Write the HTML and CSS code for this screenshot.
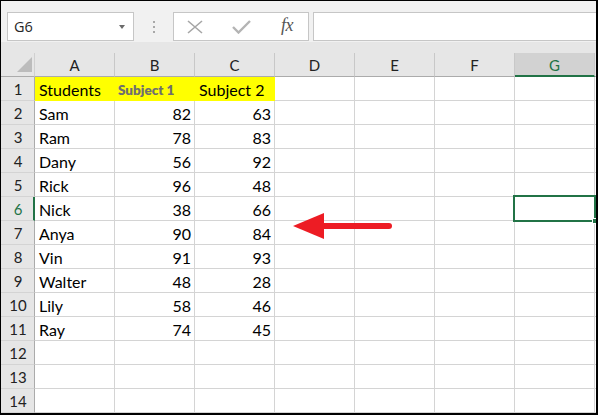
FILE: index.html
```html
<!DOCTYPE html>
<html>
<head>
<meta charset="utf-8">
<link rel="stylesheet" href="styles.css">
</head>
<body>
<div class="frame">
  <div class="toolbar">
    <div class="namebox"><span class="ref">G6</span><span class="caret"></span></div>
    <div class="dots"><i></i><i></i><i></i></div>
    <div class="fbtns">
      <svg class="ico-x" width="16" height="14" viewBox="0 0 16 14"><path d="M1 1 L15 13 M15 1 L1 13" stroke="#a6a6a6" stroke-width="1.6" fill="none"/></svg>
      <svg class="ico-ok" width="19" height="14" viewBox="0 0 19 14"><path d="M1 7 L6.5 12.5 L18 1" stroke="#b4b4b4" stroke-width="2.4" fill="none"/></svg>
      <span class="fx">fx</span>
    </div>
    <div class="finput"></div>
  </div>
  <div class="spacer"></div>
  <div class="grid">
    <div class="ch corner"><svg width="34" height="24" viewBox="0 0 34 24"><polygon points="31,4 31,19 16,19" fill="#bcbcbc"/></svg></div>
    <div class="ch">A</div><div class="ch">B</div><div class="ch">C</div><div class="ch">D</div><div class="ch">E</div><div class="ch">F</div><div class="ch sel">G</div><div class="ch"></div>

    <div class="rh">1</div><div class="c y">Students</div><div class="c y sub1">Subject 1</div><div class="c y">Subject 2</div><div class="c"></div><div class="c"></div><div class="c"></div><div class="c"></div><div class="c"></div>
    <div class="rh">2</div><div class="c">Sam</div><div class="c n">82</div><div class="c n">63</div><div class="c"></div><div class="c"></div><div class="c"></div><div class="c"></div><div class="c"></div>
    <div class="rh">3</div><div class="c">Ram</div><div class="c n">78</div><div class="c n">83</div><div class="c"></div><div class="c"></div><div class="c"></div><div class="c"></div><div class="c"></div>
    <div class="rh">4</div><div class="c">Dany</div><div class="c n">56</div><div class="c n">92</div><div class="c"></div><div class="c"></div><div class="c"></div><div class="c"></div><div class="c"></div>
    <div class="rh">5</div><div class="c">Rick</div><div class="c n">96</div><div class="c n">48</div><div class="c"></div><div class="c"></div><div class="c"></div><div class="c"></div><div class="c"></div>
    <div class="rh sel">6</div><div class="c">Nick</div><div class="c n">38</div><div class="c n">66</div><div class="c"></div><div class="c"></div><div class="c"></div><div class="c active"><span class="outline"><span class="handle"></span></span></div><div class="c"></div>
    <div class="rh">7</div><div class="c">Anya</div><div class="c n">90</div><div class="c n">84</div><div class="c"></div><div class="c"></div><div class="c"></div><div class="c"></div><div class="c"></div>
    <div class="rh">8</div><div class="c">Vin</div><div class="c n">91</div><div class="c n">93</div><div class="c"></div><div class="c"></div><div class="c"></div><div class="c"></div><div class="c"></div>
    <div class="rh">9</div><div class="c">Walter</div><div class="c n">48</div><div class="c n">28</div><div class="c"></div><div class="c"></div><div class="c"></div><div class="c"></div><div class="c"></div>
    <div class="rh">10</div><div class="c">Lily</div><div class="c n">58</div><div class="c n">46</div><div class="c"></div><div class="c"></div><div class="c"></div><div class="c"></div><div class="c"></div>
    <div class="rh">11</div><div class="c">Ray</div><div class="c n">74</div><div class="c n">45</div><div class="c"></div><div class="c"></div><div class="c"></div><div class="c"></div><div class="c"></div>
    <div class="rh">12</div><div class="c"></div><div class="c"></div><div class="c"></div><div class="c"></div><div class="c"></div><div class="c"></div><div class="c"></div><div class="c"></div>
    <div class="rh">13</div><div class="c"></div><div class="c"></div><div class="c"></div><div class="c"></div><div class="c"></div><div class="c"></div><div class="c"></div><div class="c"></div>
    <div class="rh">14</div><div class="c"></div><div class="c"></div><div class="c"></div><div class="c"></div><div class="c"></div><div class="c"></div><div class="c"></div><div class="c"></div>
  </div>
  <svg class="arrow" width="598" height="415" viewBox="0 0 598 415">
    <line x1="318" y1="226" x2="389" y2="226" stroke="#ed1c24" stroke-width="6" stroke-linecap="round"/>
    <polygon points="293,226 324,213 324,239" fill="#ed1c24"/>
  </svg>
</div>
</body>
</html>
```

FILE: styles.css
```css
* { box-sizing: border-box; }
html, body { margin: 0; padding: 0; background: #fff; }
.frame {
  position: relative;
  width: 598px;
  height: 415px;
  border-top: 1px solid #000;
  border-left: 1px solid #000;
  border-right: 2px solid #000;
  border-bottom: 2px solid #000;
  overflow: hidden;
  background: #e6e6e6;
  font-family: "Lato", "Liberation Sans", sans-serif;
}
.toolbar {
  height: 41px;
  background: #f1f1f1;
  display: flex;
  align-items: flex-start;
  padding-top: 11px;
  padding-left: 6px;
}
.namebox {
  width: 127px;
  height: 29px;
  background: #fff;
  border: 1px solid #c6c6c6;
  display: flex;
  align-items: center;
  justify-content: space-between;
  padding: 0 8px 0 6px;
  font-family: "Open Sans", "Noto Sans", sans-serif;
  font-size: 14.5px;
  color: #262626;
}
.caret {
  width: 0; height: 0;
  border-left: 3.5px solid transparent;
  border-right: 3.5px solid transparent;
  border-top: 4px solid #6a6a6a;
  margin-top: 1px;
}
.dots {
  width: 39px;
  height: 29px;
  display: flex;
  flex-direction: column;
  align-items: center;
  justify-content: center;
  gap: 3px;
}
.dots i {
  display: block;
  width: 2px;
  height: 2px;
  background: #a8a8a8;
}
.fbtns {
  width: 136px;
  height: 29px;
  background: #fff;
  border: 1px solid #c6c6c6;
  display: flex;
  align-items: center;
  padding-left: 13px;
}
.ico-x { margin-top: 1px; }
.ico-ok { margin-left: 29px; margin-top: 1px; }
.fx {
  margin-left: 30px;
  font-family: "Liberation Serif", serif;
  font-style: italic;
  font-size: 18px;
  color: #555;
  letter-spacing: -0.5px;
  margin-top: -2px;
}
.finput {
  margin-left: 4px;
  flex: 1;
  height: 29px;
  margin-right: -10px;
  background: #fff;
  border: 1px solid #c6c6c6;
}
.spacer { height: 11px; background: #e6e6e6; }
.grid {
  display: grid;
  grid-template-columns: 34px repeat(8, 80px);
  grid-auto-rows: 24px;
  width: 674px;
}
.ch {
  background: #e6e6e6;
  border-right: 1px solid #c8c8c8;
  border-bottom: 1px solid #ababab;
  display: flex;
  align-items: flex-end;
  justify-content: center;
  padding-bottom: 3px;
  font-size: 15px;
  line-height: 15px;
  color: #222;
}
.ch.corner { padding: 0; display: block; border-right-color: #d0d0d0; }
.ch.corner svg { display: block; }
.ch.sel {
  background: #d2d2d2;
  border-bottom: 2px solid #217346;
  color: #217346;
  padding-bottom: 2px;
}
.rh {
  background: #e6e6e6;
  border-right: 1px solid #ababab;
  border-bottom: 1px solid #d4d4d4;
  display: flex;
  align-items: flex-end;
  justify-content: center;
  padding-bottom: 3px;
  padding-left: 1px;
  font-size: 15px;
  line-height: 15px;
  color: #222;
}
.rh.sel {
  border-right: 2px solid #217346;
  color: #217346;
  padding-left: 2px;
}
.c {
  background: #fff;
  border-right: 1px solid #d4d4d4;
  border-bottom: 1px solid #d4d4d4;
  display: flex;
  align-items: flex-end;
  padding: 0 3px 3px 4px;
  font-size: 16px;
  line-height: 15px;
  color: #000;
  white-space: nowrap;
}
.c.n { justify-content: flex-end; }
.c.y { background: #ffff00; border-color: #ffff00; }
.c.sub1 {
  font-weight: 800;
  font-size: 13.5px;
  color: #6f6f6f;
  padding-left: 3px;
  padding-bottom: 2px;
}
.c.active { position: relative; overflow: visible; }
.outline {
  position: absolute;
  left: -2px;
  top: -2px;
  width: 83px;
  height: 27px;
  border: 2px solid #217346;
  z-index: 2;
}
.handle {
  position: absolute;
  right: -4px;
  bottom: -4px;
  width: 6px;
  height: 6px;
  background: #217346;
  border: 1px solid #fff;
}
.arrow {
  position: absolute;
  left: -1px;
  top: -1px;
  pointer-events: none;
  z-index: 3;
}
```
